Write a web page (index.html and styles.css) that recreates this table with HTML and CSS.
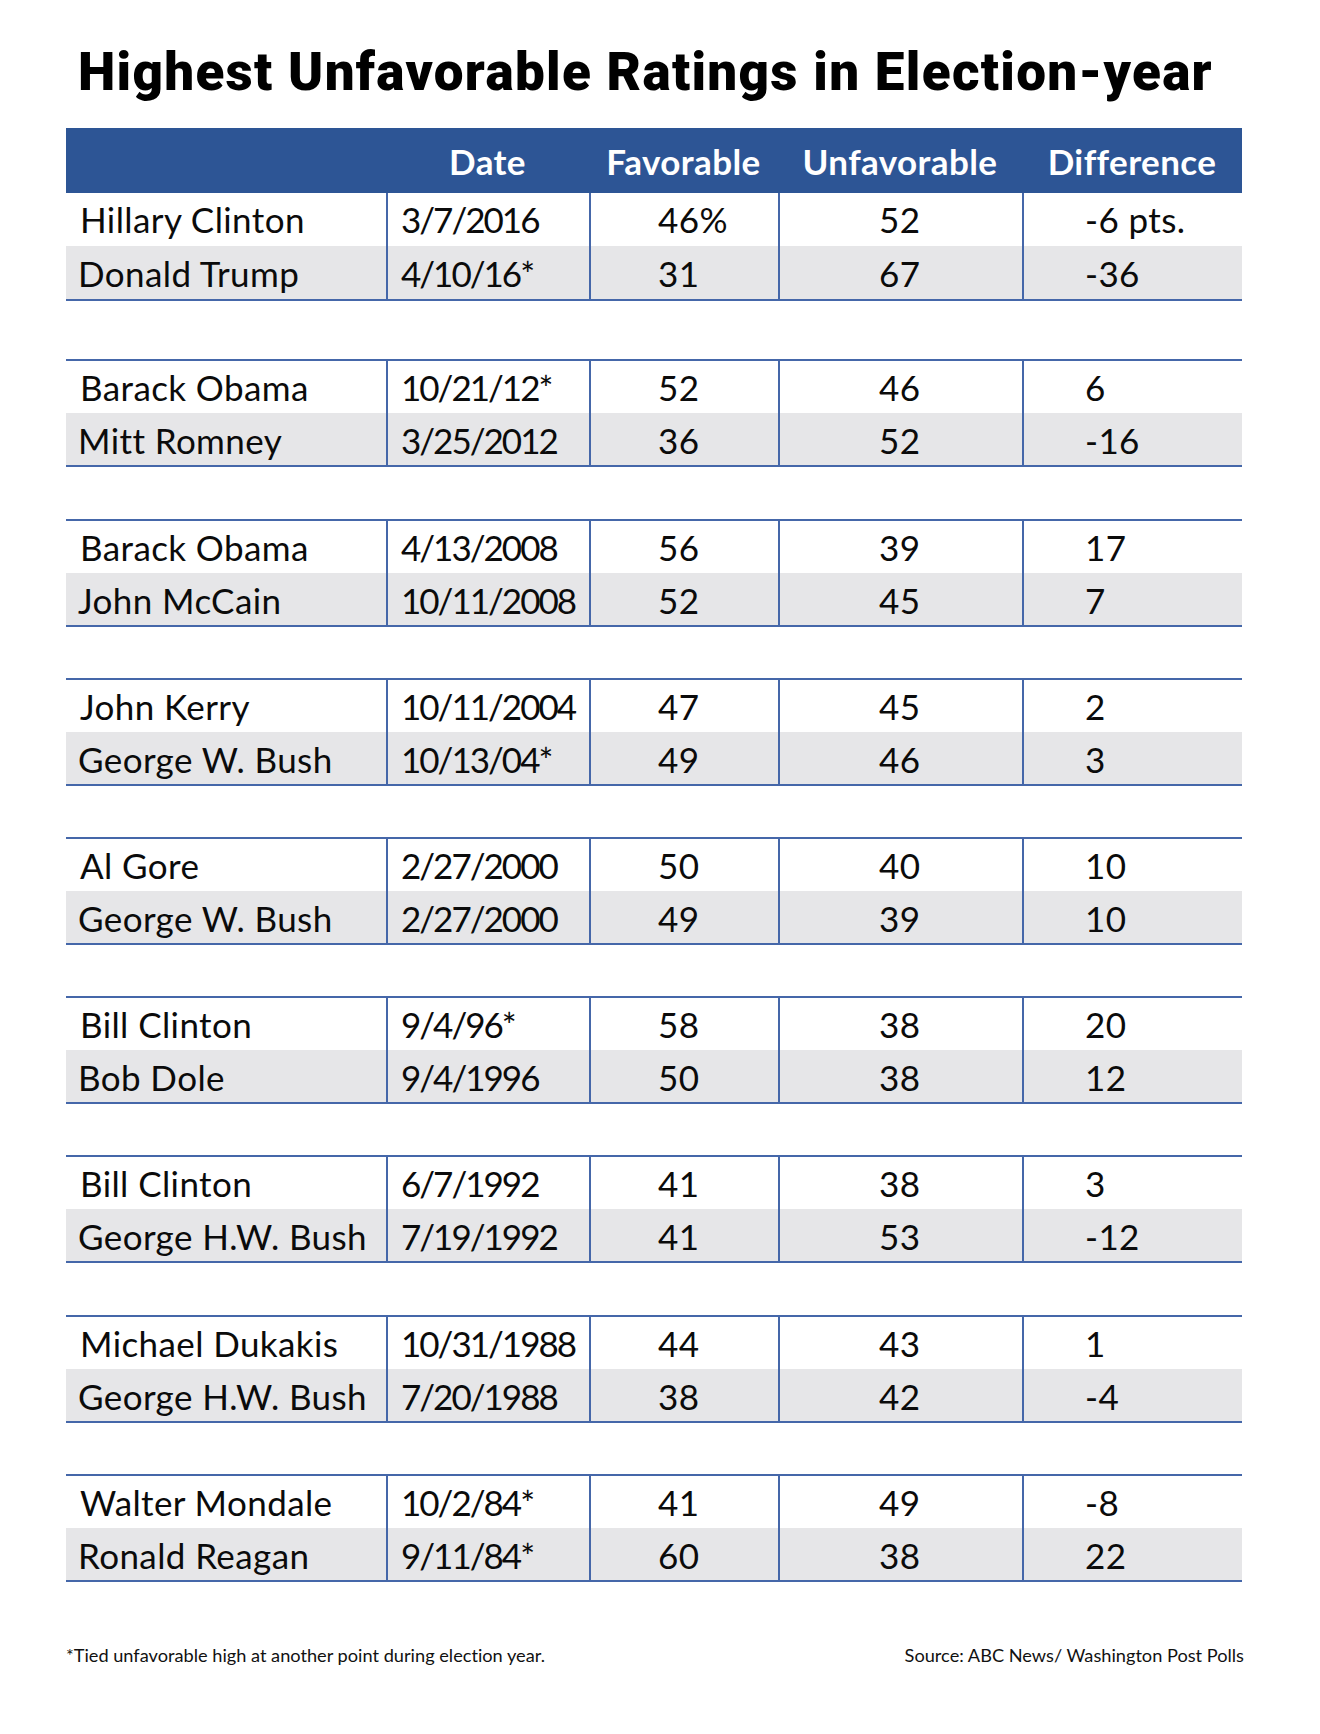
FILE: index.html
```html
<!DOCTYPE html>
<html lang="en">
<head>
<meta charset="utf-8">
<title>Highest Unfavorable Ratings in Election-year</title>
<link rel="stylesheet" href="styles.css">
</head>
<body>
<div class="page">
  <h1 class="title">Highest Unfavorable Ratings in Election-year</h1>
  <div class="table">
    <div class="head">
      <div class="hcell"></div>
      <div class="hcell">Date</div>
      <div class="hcell">Favorable</div>
      <div class="hcell">Unfavorable</div>
      <div class="hcell">Difference</div>
    </div>

    <div class="group first">
      <div class="row"><div class="c name">Hillary Clinton</div><div class="c date">3/7/2016</div><div class="c fav">46%</div><div class="c unfav">52</div><div class="c diff">-6 pts.</div></div>
      <div class="row alt"><div class="c name">Donald Trump</div><div class="c date">4/10/16*</div><div class="c fav">31</div><div class="c unfav">67</div><div class="c diff">-36</div></div>
    </div>

    <div class="group second">
      <div class="row"><div class="c name">Barack Obama</div><div class="c date">10/21/12*</div><div class="c fav">52</div><div class="c unfav">46</div><div class="c diff">6</div></div>
      <div class="row alt"><div class="c name">Mitt Romney</div><div class="c date">3/25/2012</div><div class="c fav">36</div><div class="c unfav">52</div><div class="c diff">-16</div></div>
    </div>

    <div class="group">
      <div class="row"><div class="c name">Barack Obama</div><div class="c date">4/13/2008</div><div class="c fav">56</div><div class="c unfav">39</div><div class="c diff">17</div></div>
      <div class="row alt"><div class="c name">John McCain</div><div class="c date">10/11/2008</div><div class="c fav">52</div><div class="c unfav">45</div><div class="c diff">7</div></div>
    </div>

    <div class="group">
      <div class="row"><div class="c name">John Kerry</div><div class="c date">10/11/2004</div><div class="c fav">47</div><div class="c unfav">45</div><div class="c diff">2</div></div>
      <div class="row alt"><div class="c name">George W. Bush</div><div class="c date">10/13/04*</div><div class="c fav">49</div><div class="c unfav">46</div><div class="c diff">3</div></div>
    </div>

    <div class="group">
      <div class="row"><div class="c name">Al Gore</div><div class="c date">2/27/2000</div><div class="c fav">50</div><div class="c unfav">40</div><div class="c diff">10</div></div>
      <div class="row alt"><div class="c name">George W. Bush</div><div class="c date">2/27/2000</div><div class="c fav">49</div><div class="c unfav">39</div><div class="c diff">10</div></div>
    </div>

    <div class="group">
      <div class="row"><div class="c name">Bill Clinton</div><div class="c date">9/4/96*</div><div class="c fav">58</div><div class="c unfav">38</div><div class="c diff">20</div></div>
      <div class="row alt"><div class="c name">Bob Dole</div><div class="c date">9/4/1996</div><div class="c fav">50</div><div class="c unfav">38</div><div class="c diff">12</div></div>
    </div>

    <div class="group">
      <div class="row"><div class="c name">Bill Clinton</div><div class="c date">6/7/1992</div><div class="c fav">41</div><div class="c unfav">38</div><div class="c diff">3</div></div>
      <div class="row alt"><div class="c name">George H.W. Bush</div><div class="c date">7/19/1992</div><div class="c fav">41</div><div class="c unfav">53</div><div class="c diff">-12</div></div>
    </div>

    <div class="group">
      <div class="row"><div class="c name">Michael Dukakis</div><div class="c date">10/31/1988</div><div class="c fav">44</div><div class="c unfav">43</div><div class="c diff">1</div></div>
      <div class="row alt"><div class="c name">George H.W. Bush</div><div class="c date">7/20/1988</div><div class="c fav">38</div><div class="c unfav">42</div><div class="c diff">-4</div></div>
    </div>

    <div class="group">
      <div class="row"><div class="c name">Walter Mondale</div><div class="c date">10/2/84*</div><div class="c fav">41</div><div class="c unfav">49</div><div class="c diff">-8</div></div>
      <div class="row alt"><div class="c name">Ronald Reagan</div><div class="c date">9/11/84*</div><div class="c fav">60</div><div class="c unfav">38</div><div class="c diff">22</div></div>
    </div>
  </div>

  <div class="notes">
    <span class="note">*Tied unfavorable high at another point during election year.</span>
    <span class="source">Source: ABC News/ Washington Post Polls</span>
  </div>
</div>
</body>
</html>
```

FILE: styles.css
```css
html, body {
  margin: 0;
  padding: 0;
  background: #ffffff;
}

.page {
  width: 1320px;
  box-sizing: border-box;
  padding: 40px 78px 0 66px;
  font-family: Lato, "Liberation Sans", sans-serif;
  font-variant-ligatures: none;
  color: #0b0b0b;
}

.title {
  margin: 0 0 24px 0;
  padding-left: 12px;
  font-family: Roboto, "Liberation Sans", sans-serif;
  font-weight: 900;
  font-size: 53px;
  line-height: 64px;
  letter-spacing: 1.3px;
  color: #000;
  white-space: nowrap;
}

.table {
  width: 1176px;
}

.head,
.row {
  display: grid;
  grid-template-columns: 320px 203px 189px 244px 220px;
}

.head {
  height: 65px;
  background: #2d5595;
  color: #ffffff;
  align-items: center;
  font-weight: 700;
  font-size: 35px;
  line-height: 42px;
  letter-spacing: 0.4px;
}

.hcell {
  text-align: center;
}

.group {
  margin-top: 51.2px;
  border-top: 2px solid #4567a9;
  border-bottom: 2px solid #4567a9;
}

.group.first {
  margin-top: 0;
  border-top: 0;
}

.group.first .row {
  height: 53px;
}

.group.second {
  margin-top: 58.4px;
}

.row {
  height: 52px;
  font-size: 35px;
  line-height: 52px;
  letter-spacing: 0.4px;
  background: #ffffff;
}

.row.alt {
  background: #e6e6e8;
}

.c {
  white-space: nowrap;
  box-sizing: border-box;
}

.c + .c {
  border-left: 2px solid #4567a9;
}

.row.alt .c {
  padding-top: 1px;
}

.name { padding-left: 14px; }
.row.alt .name { padding-left: 12px; }
.date { padding-left: 13px; letter-spacing: -2px; }
.fav { padding-left: 67px; }
.unfav { padding-left: 99px; }
.diff { padding-left: 61px; }

.notes {
  width: 1178px;
  margin-top: 62px;
  display: flex;
  justify-content: space-between;
  font-size: 18.2px;
  line-height: 22px;
  color: #111;
}
```
